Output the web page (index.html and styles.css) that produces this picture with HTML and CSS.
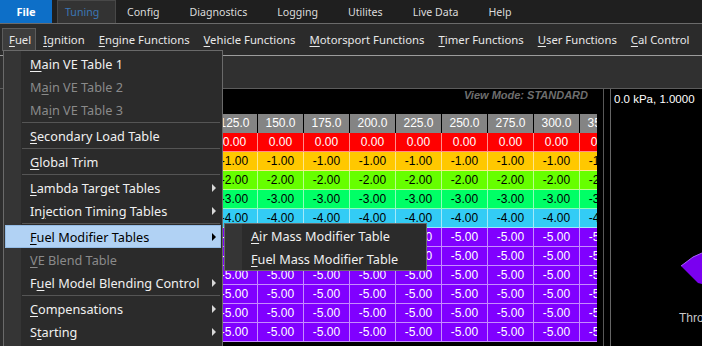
FILE: index.html
```html
<!DOCTYPE html>
<html lang="en">
<head>
    <meta charset="UTF-8">
    <meta name="viewport" content="width=device-width, initial-scale=1.0">
    <title>Tuning - Fuel</title>
    <link rel="stylesheet" href="styles.css">
</head>
<body>
<div class="app">
    <div class="menubar">
        <div class="file-btn">File</div>
        <div class="tab">Tuning</div>
        <div class="top-item">Config</div>
        <div class="top-item">Diagnostics</div>
        <div class="top-item">Logging</div>
        <div class="top-item">Utilites</div>
        <div class="top-item">Live Data</div>
        <div class="top-item">Help</div>
    </div>

    <div class="ribbon">
        <div class="rb-item open"><u>F</u>uel</div>
        <div class="rb-item"><u>I</u>gnition</div>
        <div class="rb-item"><u>E</u>ngine Functions</div>
        <div class="rb-item"><u>V</u>ehicle Functions</div>
        <div class="rb-item"><u>M</u>otorsport Functions</div>
        <div class="rb-item"><u>T</u>imer Functions</div>
        <div class="rb-item"><u>U</u>ser Functions</div>
        <div class="rb-item"><u>C</u>al Control</div>
    </div>

    <div class="toolbar"></div>

    <div class="workspace">
        <div class="sidebar"></div>

        <div class="table-view">
            <div class="view-mode">View Mode: STANDARD</div>
            <div class="grid">
                <div class="row head">
                    <span>125.0</span><span>150.0</span><span>175.0</span><span>200.0</span><span>225.0</span>
                    <span>250.0</span><span>275.0</span><span>300.0</span><span>350.0</span><span>400.0</span>
                </div>
                <div class="row red">
                    <span>0.00</span><span>0.00</span><span>0.00</span><span>0.00</span><span>0.00</span>
                    <span>0.00</span><span>0.00</span><span>0.00</span><span>0.00</span><span>0.00</span>
                </div>
                <div class="row orange">
                    <span>-1.00</span><span>-1.00</span><span>-1.00</span><span>-1.00</span><span>-1.00</span>
                    <span>-1.00</span><span>-1.00</span><span>-1.00</span><span>-1.00</span><span>-1.00</span>
                </div>
                <div class="row lime">
                    <span>-2.00</span><span>-2.00</span><span>-2.00</span><span>-2.00</span><span>-2.00</span>
                    <span>-2.00</span><span>-2.00</span><span>-2.00</span><span>-2.00</span><span>-2.00</span>
                </div>
                <div class="row green">
                    <span>-3.00</span><span>-3.00</span><span>-3.00</span><span>-3.00</span><span>-3.00</span>
                    <span>-3.00</span><span>-3.00</span><span>-3.00</span><span>-3.00</span><span>-3.00</span>
                </div>
                <div class="row cyan">
                    <span>-4.00</span><span>-4.00</span><span>-4.00</span><span>-4.00</span><span>-4.00</span>
                    <span>-4.00</span><span>-4.00</span><span>-4.00</span><span>-4.00</span><span>-4.00</span>
                </div>
                <div class="row purple">
                    <span>-5.00</span><span>-5.00</span><span>-5.00</span><span>-5.00</span><span>-5.00</span>
                    <span>-5.00</span><span>-5.00</span><span>-5.00</span><span>-5.00</span><span>-5.00</span>
                </div>
                <div class="row purple">
                    <span>-5.00</span><span>-5.00</span><span>-5.00</span><span>-5.00</span><span>-5.00</span>
                    <span>-5.00</span><span>-5.00</span><span>-5.00</span><span>-5.00</span><span>-5.00</span>
                </div>
                <div class="row purple">
                    <span>-5.00</span><span>-5.00</span><span>-5.00</span><span>-5.00</span><span>-5.00</span>
                    <span>-5.00</span><span>-5.00</span><span>-5.00</span><span>-5.00</span><span>-5.00</span>
                </div>
                <div class="row purple">
                    <span>-5.00</span><span>-5.00</span><span>-5.00</span><span>-5.00</span><span>-5.00</span>
                    <span>-5.00</span><span>-5.00</span><span>-5.00</span><span>-5.00</span><span>-5.00</span>
                </div>
                <div class="row purple">
                    <span>-5.00</span><span>-5.00</span><span>-5.00</span><span>-5.00</span><span>-5.00</span>
                    <span>-5.00</span><span>-5.00</span><span>-5.00</span><span>-5.00</span><span>-5.00</span>
                </div>
                <div class="row purple">
                    <span>-5.00</span><span>-5.00</span><span>-5.00</span><span>-5.00</span><span>-5.00</span>
                    <span>-5.00</span><span>-5.00</span><span>-5.00</span><span>-5.00</span><span>-5.00</span>
                </div>
            </div>
        </div>

        <div class="splitter"></div>

        <div class="graph-panel">
            <div class="readout">0.0 kPa, 1.0000</div>
            <!-- 3D surface, only its left tip shows at this width -->
            <svg class="surface" width="22" height="42" viewBox="0 0 22 42">
                <polygon points="1,18 13,9 22,5 22,36 18,35" fill="#7a00f0"/>
                <polyline points="1,18 13,9 22,5" fill="none" stroke="#a860ff" stroke-width="1"/>
            </svg>
            <div class="axis-label">Throttle Position</div>
        </div>
    </div>

    <!-- Fuel dropdown -->
    <div class="dropdown">
        <div class="dd-item"><u>M</u>ain VE Table 1</div>
        <div class="dd-item disabled">M<u>a</u>in VE Table 2</div>
        <div class="dd-item disabled">Ma<u>i</u>n VE Table 3</div>
        <div class="dd-sep"></div>
        <div class="dd-item"><u>S</u>econdary Load Table</div>
        <div class="dd-sep"></div>
        <div class="dd-item"><u>G</u>lobal Trim</div>
        <div class="dd-sep"></div>
        <div class="dd-item"><u>L</u>ambda Target Tables<i class="arrow"></i></div>
        <div class="dd-item">In<u>j</u>ection Timing Tables<i class="arrow"></i></div>
        <div class="dd-sep"></div>
        <div class="dd-item active"><u>F</u>uel Modifier Tables<i class="arrow"></i></div>
        <div class="dd-item disabled"><u>V</u>E Blend Table</div>
        <div class="dd-item">F<u>u</u>el Model Blending Control<i class="arrow"></i></div>
        <div class="dd-sep"></div>
        <div class="dd-item"><u>C</u>ompensations<i class="arrow"></i></div>
        <div class="dd-item">S<u>t</u>arting<i class="arrow"></i></div>
        <div class="dd-item">Idle Control<i class="arrow"></i></div>
    </div>

    <div class="submenu">
        <div class="dd-item"><u>A</u>ir Mass Modifier Table</div>
        <div class="dd-item"><u>F</u>uel Mass Modifier Table</div>
    </div>
</div>
</body>
</html>
```

FILE: styles.css
```css
body, html {
    margin: 0;
    background: #1f1f1f;
    overflow: hidden;
}
.app {
    position: relative;
    width: 702px;
    height: 346px;
    overflow: hidden;
    display: flex;
    flex-direction: column;
    font-family: "Noto Sans", "Open Sans", sans-serif;
}

/* top menu */
.menubar {
    height: 23px;
    flex: none;
    display: flex;
    background: #1f1f1f;
    color: #dcdcdc;
    font-size: 10.6px;
}
.file-btn {
    width: 52px;
    background: #0d6fc8;
    color: #fff;
    font-weight: bold;
    font-size: 11px;
    display: flex;
    align-items: center;
    justify-content: center;
}
.tab {
    width: 59px;
    margin: 0 -4px 0 5px;
    padding-left: 7px;
    box-sizing: border-box;
    background: #333;
    border: 1px solid #484848;
    border-bottom: none;
    color: #3b77b6;
    display: flex;
    align-items: center;
}
.top-item {
    padding: 0 15px;
    display: flex;
    align-items: center;
}

/* second row */
.ribbon {
    height: 31px;
    flex: none;
    display: flex;
    align-items: center;
    padding-left: 2px;
    background: #2b2b2b;
    border-top: 1px solid #6b6b6b;
    border-bottom: 1px solid #9c9c9c;
    color: #e8e8e8;
    font-size: 11.3px;
}
.rb-item {
    height: 23px;
    line-height: 23px;
    padding: 0 7px;
    box-sizing: border-box;
    white-space: nowrap;
}
.rb-item.open {
    padding: 0 4px 0 6px;
    line-height: 21px;
    background: #3d3d3d;
    border: 1px solid #5c5c5c;
}
u {
    text-underline-offset: 2px;
    text-decoration-thickness: 1px;
}

.toolbar {
    height: 32px;
    flex: none;
    background: #303030;
    border-bottom: 1px solid #5c5c5c;
}

/* main area */
.workspace {
    flex: 1;
    display: flex;
    background: #000;
    min-height: 0;
}
.sidebar {
    width: 222px;
    flex: none;
    background: #2e2e2e;
}
.table-view {
    width: 375px;
    flex: none;
    overflow: hidden;
}
.view-mode {
    height: 25px;
    line-height: 25px;
    padding-right: 9px;
    text-align: right;
    color: #6e6e6e;
    font: italic bold 11px "Liberation Sans", Arial, sans-serif;
}
.grid {
    width: 460px;
    margin-left: -10px;
    font: 12px "Liberation Sans", Arial, sans-serif;
}
.row {
    display: flex;
    height: 19px;
}
.row span {
    width: 46px;
    flex: none;
    box-sizing: border-box;
    text-align: center;
    line-height: 18px;
    border-right: 1px solid rgba(255,255,255,0.55);
    border-bottom: 1px solid rgba(255,255,255,0.55);
}
.row.head span {
    background: #848484;
    color: #fff;
    line-height: 19px;
    border-right: 1px solid #000;
    border-bottom: none;
}
.red span { background: #ff0000; color: #fff; }
.orange span { background: #ffc800; color: #000; }
.lime span { background: #66ff00; color: #000; }
.green span { background: #00ff66; color: #000; }
.cyan span { background: #33ccf5; color: #000; }
.purple span { background: #8000ff; color: #fff; }

.splitter {
    width: 6px;
    flex: none;
    border-right: 1px solid #585858;
    margin-right: 6px;
}
.graph-panel {
    flex: 1;
    position: relative;
    overflow: hidden;
    border-left: 1px solid #666;
    color: #fff;
}
.readout {
    padding: 4px 0 0 3px;
    font: 11.5px "Liberation Sans", Arial, sans-serif;
    white-space: nowrap;
}
.surface {
    position: absolute;
    left: 69px;
    top: 159px;
}
.axis-label {
    position: absolute;
    left: 68px;
    top: 222px;
    color: #c8c8c8;
    font: 12px "Liberation Sans", Arial, sans-serif;
    white-space: nowrap;
}

/* dropdown menus */
.dropdown, .submenu {
    position: absolute;
    box-sizing: border-box;
    border: 1px solid #6a6a6a;
    background: linear-gradient(to right, #353535 17px, #2b2b2b 17px);
    color: #f0f0f0;
    font-size: 12.7px;
}
.dropdown {
    left: 3px;
    top: 50px;
    width: 220px;
    padding: 1px;
}
.submenu {
    left: 224px;
    top: 223px;
    width: 203px;
}
.dd-item {
    height: 23px;
    display: flex;
    align-items: center;
    padding-left: 25px;
    box-sizing: border-box;
    white-space: nowrap;
}
.submenu .dd-item {
    padding-left: 26px;
}
.dd-item.disabled {
    color: #8a8a8a;
}
.dd-item.active {
    background: #b1d2f4;
    border: 1px solid #94bce6;
    padding-left: 24px;
    color: #000;
}
.dd-sep {
    height: 1px;
    margin: 1px 1px 1px 17px;
    background: #555;
}
.arrow {
    margin-left: auto;
    margin-right: 5px;
    width: 0;
    height: 0;
    border-left: 4px solid #d8d8d8;
    border-top: 4px solid transparent;
    border-bottom: 4px solid transparent;
}
.active .arrow {
    border-left-color: #000;
    margin-right: 4px;
}
```
